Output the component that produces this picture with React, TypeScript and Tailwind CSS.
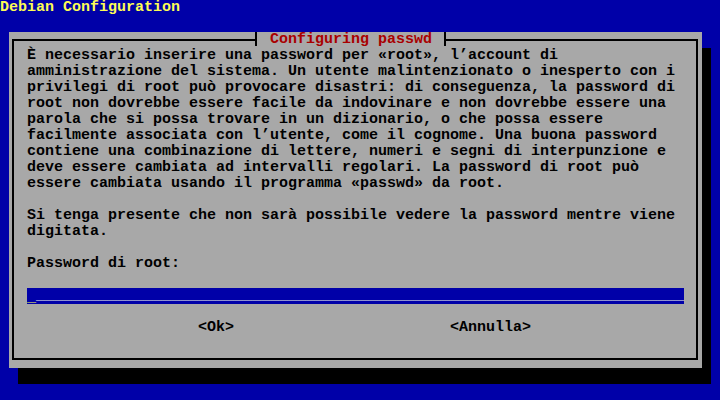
const lines = [
  "È necessario inserire una password per «root», l’account di",
  "amministrazione del sistema. Un utente malintenzionato o inesperto con i",
  "privilegi di root può provocare disastri: di conseguenza, la password di",
  "root non dovrebbe essere facile da indovinare e non dovrebbe essere una",
  "parola che si possa trovare in un dizionario, o che possa essere",
  "facilmente associata con l’utente, come il cognome. Una buona password",
  "contiene una combinazione di lettere, numeri e segni di interpunzione e",
  "deve essere cambiata ad intervalli regolari. La password di root può",
  "essere cambiata usando il programma «passwd» da root.",
  "",
  "Si tenga presente che non sarà possibile vedere la password mentre viene",
  "digitata.",
  "",
  "Password di root:",
  "",
];

function Line({ text }: { text: string }) {
  return <div className="h-4 whitespace-pre">{text || " "}</div>;
}

export default function App() {
  return (
    <div className="w-[720px] h-[400px] overflow-hidden bg-[#0000a8] font-['Liberation_Mono',monospace] font-bold text-[15px] leading-4">
      <div className="h-4 text-[#fcfc54] whitespace-pre">Debian Configuration</div>

      {/* dialog */}
      <div className="relative ml-[9px] mt-4 w-[693px] h-[336px] bg-[#a8a8a8] shadow-[9px_16px_0_#000] pt-[7px] pl-[3px] pr-[4px]">
        <div className="h-[321px] border-2 border-black pt-[7px] pl-[13px] text-black">
          {lines.map((l, i) => (
            <Line key={i} text={l} />
          ))}

          {/* entry */}
          <div className="w-[657px] h-4 bg-[#0000a8] flex whitespace-pre">
            <span className="text-[#fcfc54] translate-y-[2px]">_</span>
            <span className="text-[#f4f4ec]">{"_".repeat(72)}</span>
          </div>

          <Line text="" />
          <div className="h-4 flex whitespace-pre">
            <span className="ml-[171px]">&lt;Ok&gt;</span>
            <span className="ml-[216px]">&lt;Annulla&gt;</span>
          </div>
        </div>

        {/* title on the top border */}
        <div className="absolute left-[246px] top-px h-[14px] w-[191px] bg-[#a8a8a8] border-x-2 border-black pl-[13px] -mt-px">
          <div className="h-4 text-[#a80000] whitespace-pre">Configuring passwd</div>
        </div>
      </div>
    </div>
  );
}
